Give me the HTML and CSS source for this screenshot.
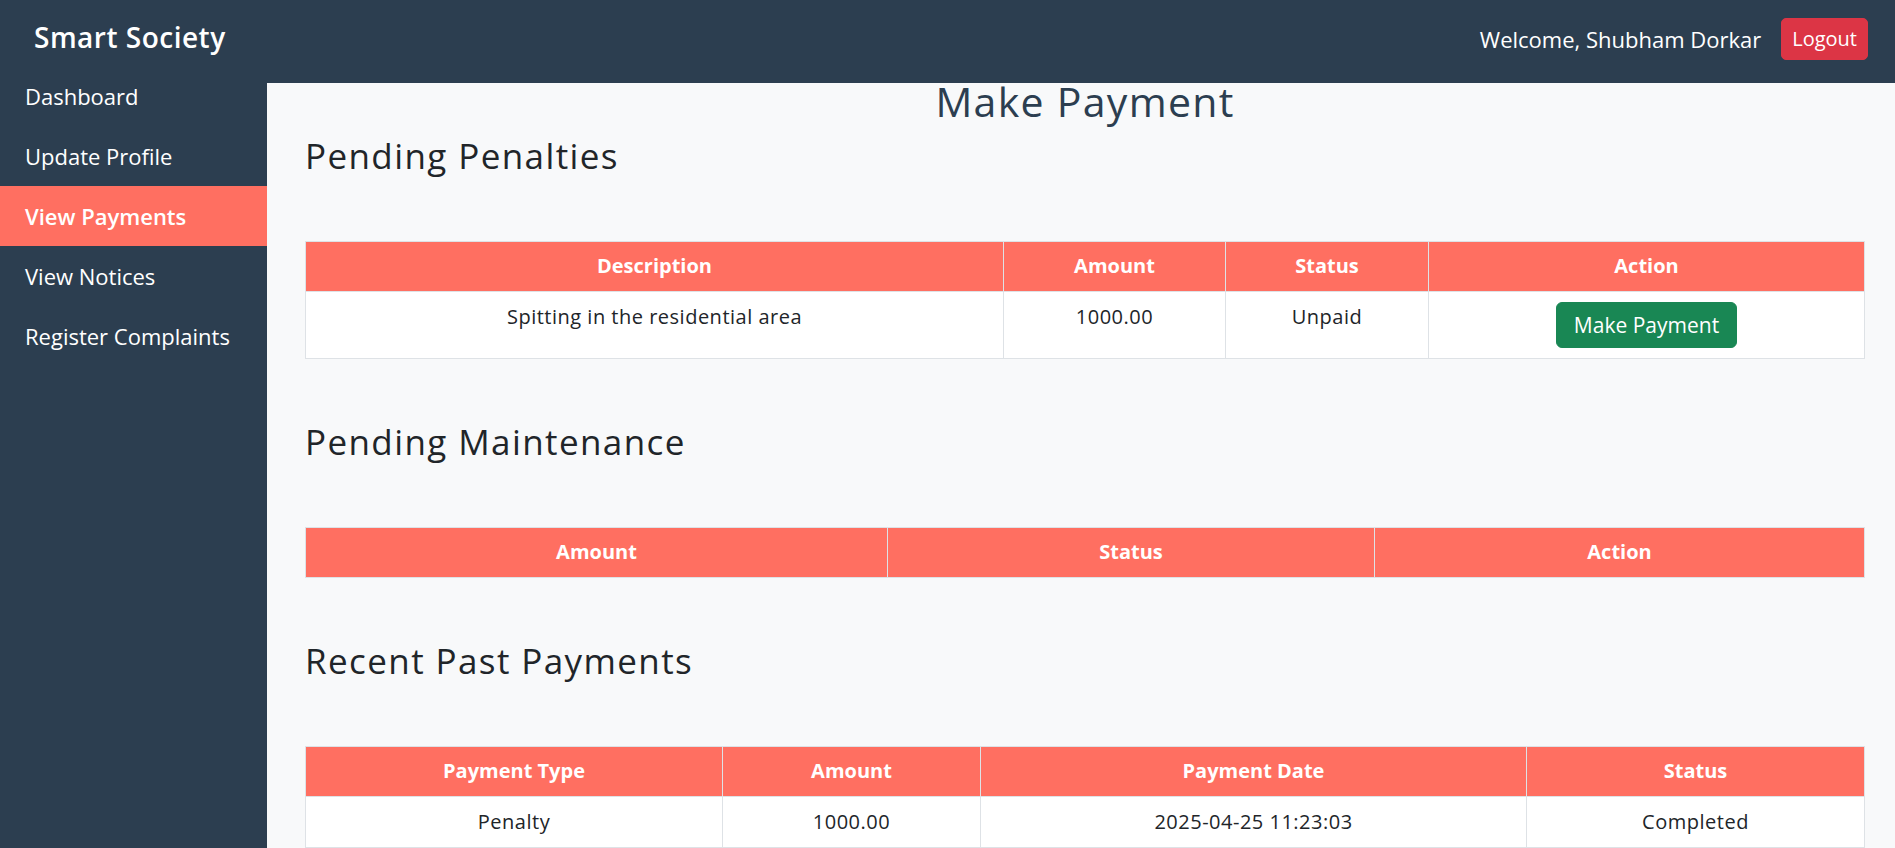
FILE: index.html
```html
<!DOCTYPE html>
<html lang="en">
<head>
<meta charset="utf-8">
<title>Make Payment - Smart Society</title>
<link rel="stylesheet" href="styles.css">
</head>
<body>
<div class="app">
  <aside class="sidebar">
    <div class="brand">Smart Society</div>
    <nav class="nav">
      <a class="nav-item" href="#">Dashboard</a>
      <a class="nav-item" href="#">Update Profile</a>
      <a class="nav-item active" href="#">View Payments</a>
      <a class="nav-item" href="#">View Notices</a>
      <a class="nav-item" href="#">Register Complaints</a>
    </nav>
  </aside>
  <header class="topbar">
    <span class="welcome">Welcome, Shubham Dorkar</span>
    <button class="btn-logout">Logout</button>
  </header>
  <main class="main">
    <h1 class="page-title">Make Payment</h1>

    <h2 class="section-title first">Pending Penalties</h2>
    <table class="data-table">
      <colgroup>
        <col class="c-desc"><col class="c-amt1"><col class="c-stat1"><col class="c-act1">
      </colgroup>
      <thead>
        <tr><th>Description</th><th>Amount</th><th>Status</th><th>Action</th></tr>
      </thead>
      <tbody>
        <tr>
          <td>Spitting in the residential area</td>
          <td>1000.00</td>
          <td>Unpaid</td>
          <td><button class="btn-pay">Make Payment</button></td>
        </tr>
      </tbody>
    </table>

    <h2 class="section-title">Pending Maintenance</h2>
    <table class="data-table">
      <colgroup>
        <col class="c-amt2"><col class="c-stat2"><col class="c-act2">
      </colgroup>
      <thead>
        <tr><th>Amount</th><th>Status</th><th>Action</th></tr>
      </thead>
    </table>

    <h2 class="section-title">Recent Past Payments</h2>
    <table class="data-table">
      <colgroup>
        <col class="c-type3"><col class="c-amt3"><col class="c-date3"><col class="c-stat3">
      </colgroup>
      <thead>
        <tr><th>Payment Type</th><th>Amount</th><th>Payment Date</th><th>Status</th></tr>
      </thead>
      <tbody>
        <tr><td>Penalty</td><td>1000.00</td><td>2025-04-25 11:23:03</td><td>Completed</td></tr>
      </tbody>
    </table>
  </main>
</div>
</body>
</html>
```

FILE: styles.css
```css
* { box-sizing: border-box; }

html, body {
  margin: 0;
  padding: 0;
}

body {
  font-family: "Open Sans", "Noto Sans", sans-serif;
  color: #212529;
  background: #f8f9fa;
  overflow: hidden;
}

.app {
  display: grid;
  grid-template-columns: 267px 1fr;
  grid-template-rows: 83px 1fr;
  min-height: 100vh;
}

/* Sidebar */
.sidebar {
  grid-row: 1 / 3;
  grid-column: 1;
  background: #2c3e50;
  display: flex;
  flex-direction: column;
}

.brand {
  height: 66px;
  padding: 22px 0 0 34px;
  font-size: 28px;
  line-height: 30px;
  font-weight: 600;
  letter-spacing: 0.5px;
  color: #ffffff;
  white-space: nowrap;
}

.nav {
  display: flex;
  flex-direction: column;
}

.nav-item {
  display: block;
  height: 60px;
  line-height: 60px;
  padding-left: 25px;
  font-size: 22px;
  color: #ffffff;
  text-decoration: none;
  white-space: nowrap;
}

.nav-item.active {
  background: #ff6f61;
  font-weight: 600;
}

/* Top bar */
.topbar {
  grid-row: 1;
  grid-column: 2;
  background: #2c3e50;
  display: flex;
  justify-content: flex-end;
  align-items: center;
  gap: 20px;
  padding: 0 28px 6px 0;
}

.welcome {
  font-size: 22px;
  color: #ffffff;
}

.btn-logout {
  font-family: inherit;
  font-size: 20px;
  line-height: 30px;
  padding: 5px 10px;
  color: #ffffff;
  background: #dc3545;
  border: 1px solid #dc3545;
  border-radius: 5px;
}

/* Main */
.main {
  grid-row: 2;
  grid-column: 2;
  background: #f8f9fa;
  padding: 0 31px 0 38px;
}

.page-title {
  margin: 0;
  text-align: center;
  font-size: 41px;
  line-height: 36px;
  font-weight: 500;
  letter-spacing: 1.3px;
  color: #2c3e50;
}

.section-title {
  margin: 62px 0 64px;
  font-size: 35px;
  line-height: 42px;
  font-weight: 500;
  letter-spacing: 1.4px;
  color: #212529;
}

.section-title.first {
  margin-top: 16px;
}

.data-table {
  width: 100%;
  border-collapse: collapse;
  table-layout: fixed;
  background: #ffffff;
}

.data-table th,
.data-table td {
  border: 1px solid #dee2e6;
  padding: 10px;
  font-size: 20px;
  line-height: 30px;
  text-align: center;
  vertical-align: top;
}

.data-table th {
  background: #ff6f61;
  color: #ffffff;
  font-weight: 700;
  padding: 9px 10px 10px;
}

.data-table td {
  color: #212529;
  font-weight: 400;
  letter-spacing: 0.5px;
}

.btn-pay {
  font-family: inherit;
  font-size: 21px;
  line-height: 30px;
  padding: 7px 17px;
  color: #ffffff;
  background: #198754;
  border: 1px solid #198754;
  border-radius: 6px;
  letter-spacing: 0;
}

/* Column widths */
.c-desc { width: 698px; }
.c-amt1 { width: 222px; }
.c-stat1 { width: 203px; }
.c-act1 { width: 436px; }

.c-amt2 { width: 582px; }
.c-stat2 { width: 487px; }
.c-act2 { width: 490px; }

.c-type3 { width: 417px; }
.c-amt3 { width: 258px; }
.c-date3 { width: 546px; }
.c-stat3 { width: 338px; }
```
